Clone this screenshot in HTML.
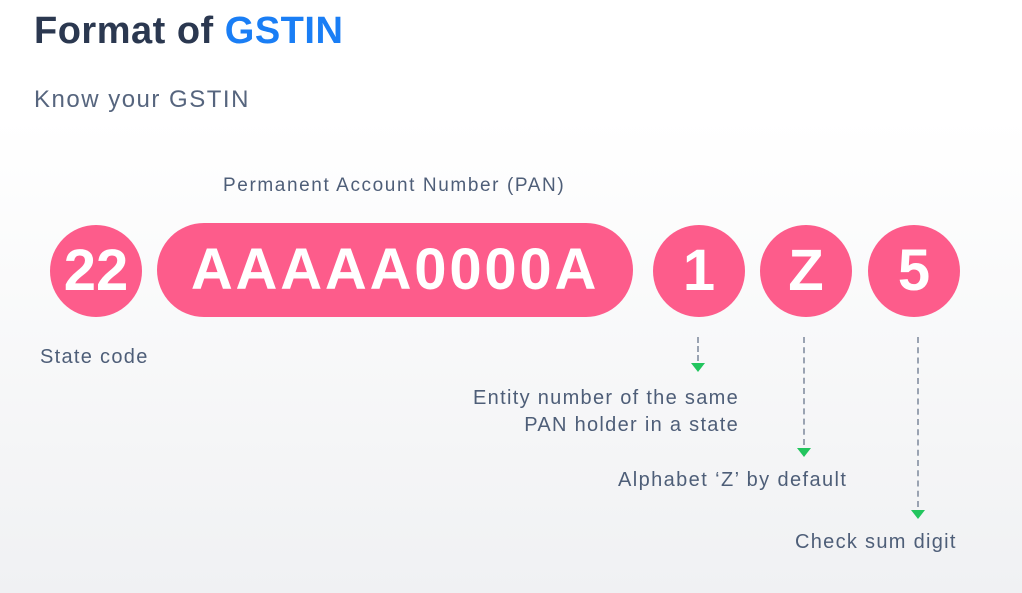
<!DOCTYPE html>
<html><head><style>
body{margin:0;width:1022px;height:593px;overflow:hidden;background:linear-gradient(#fff 0%,#fff 20%,#f0f1f3 100%);font-family:"Liberation Sans",sans-serif;position:relative}
.a{position:absolute;white-space:nowrap}
.c{position:absolute;top:225px;width:92px;height:92px;border-radius:46px;background:#fd5c8b;color:#fff;font-weight:bold;font-size:58px;line-height:92px;text-align:center}
.t{color:#4e5e78;font-size:20px;letter-spacing:1.3px}
.l{position:absolute;border-left:2px dashed #9aa3b2;width:0}
.tr{position:absolute;width:0;height:0;border-left:7px solid transparent;border-right:7px solid transparent;border-top:9px solid #22c55e}
</style></head><body>
<div class="a" style="left:34px;top:10px;font-size:38px;font-weight:bold;color:#2b3850;letter-spacing:0.5px">Format of <span style="color:#1a7ef5">GSTIN</span></div>
<div class="a" style="left:34px;top:86px;font-size:24px;color:#56657e;letter-spacing:1.5px">Know your GSTIN</div>
<div class="a t" style="left:223px;top:175px;font-size:19px;letter-spacing:1.6px">Permanent Account Number (PAN)</div>
<div class="c" style="left:50px">22</div>
<div class="c" style="left:157px;width:476px;top:223px;height:94px;line-height:94px;border-radius:47px;letter-spacing:2.8px">AAAAA0000A</div>
<div class="c" style="left:653px">1</div>
<div class="c" style="left:760px">Z</div>
<div class="c" style="left:868px">5</div>
<div class="a t" style="left:40px;top:346px">State code</div>
<div class="l" style="left:697px;top:337px;height:24px"></div>
<div class="tr" style="left:691px;top:363px"></div>
<div class="a t" style="right:283px;top:385px;text-align:right;line-height:27px">Entity number of the same<br>PAN holder in a state</div>
<div class="l" style="left:803px;top:337px;height:108px"></div>
<div class="tr" style="left:797px;top:448px"></div>
<div class="a t" style="left:618px;top:469px;letter-spacing:1.4px">Alphabet ‘Z’ by default</div>
<div class="l" style="left:917px;top:337px;height:170px"></div>
<div class="tr" style="left:911px;top:510px"></div>
<div class="a t" style="left:795px;top:531px">Check sum digit</div>
</body></html>
